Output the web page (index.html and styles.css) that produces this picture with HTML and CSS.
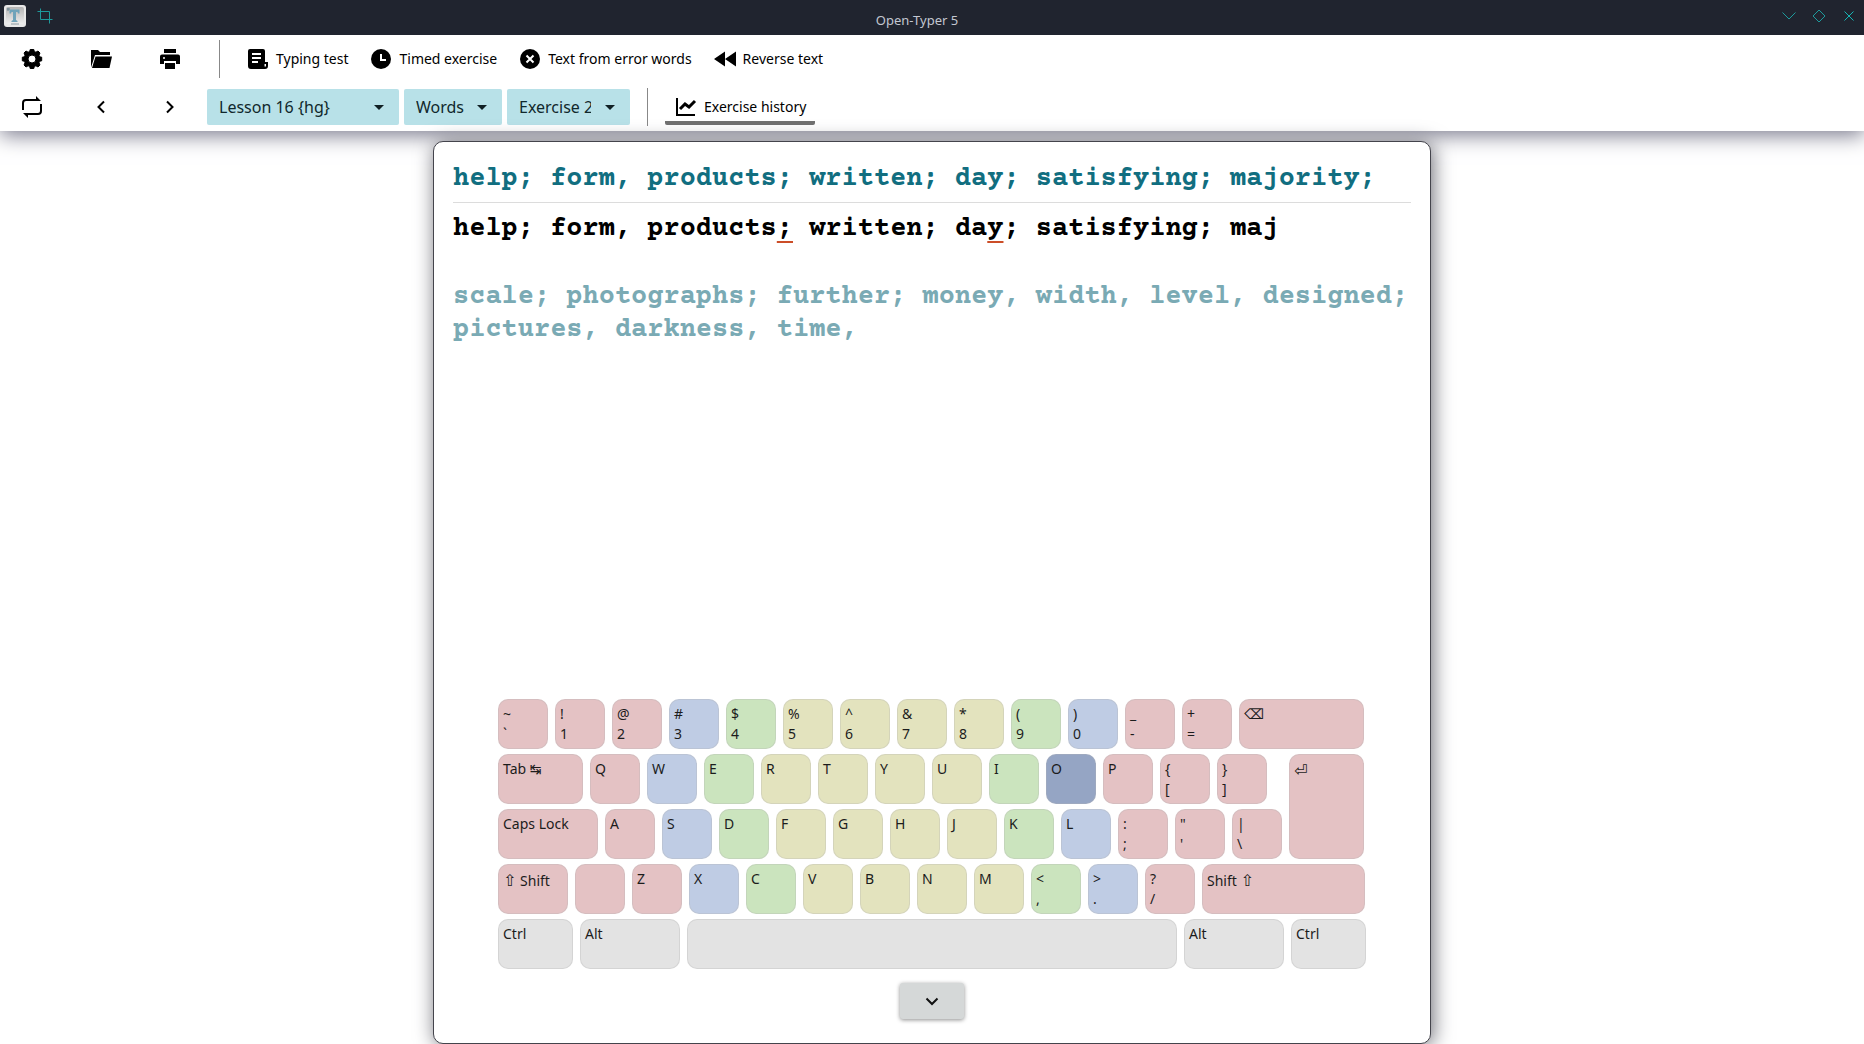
FILE: index.html
```html
<!DOCTYPE html>
<html lang="en">
<head>
<meta charset="utf-8">
<title>Open-Typer 5</title>
<link rel="stylesheet" href="styles.css">
</head>
<body>
<header class="titlebar">
  <div class="title-side">
    <svg class="app-icon" width="22" height="22" viewBox="0 0 22 22"><defs><linearGradient id="cap" x1="0" y1="0" x2="0" y2="1"><stop offset="0" stop-color="#b4b4b4"/><stop offset="1" stop-color="#eeeeee"/></linearGradient></defs><rect width="22" height="22" rx="3" fill="#e8e8e8"/><rect x="2" y="2" width="18" height="17" rx="2" fill="url(#cap)"/><path d="M5.500 4.500h10v4h-1.500l-.5-1.500h-1.500v8l1.500 1v1h-6v-1l1.500-1v-8H7.500L7 8.500H5.500z" fill="#6fa3ba"/><path d="M7 19h8" stroke="#8a9aa2" stroke-width="1"/><path d="M3 4h3M4 3v3" stroke="#6b8490"/></svg>
    <svg class="crop-icon" width="16" height="16" viewBox="0 0 16 16" fill="none" stroke="#1d9a9c"><path d="M.5 3.500h12v9M3.500.5v11h12M12.500 10v5.500"/></svg>
  </div>
  <h1 class="title">Open-Typer 5</h1>
  <div class="title-side title-buttons">
    <button class="win-btn" aria-label="Minimize"><svg width="14" height="14" viewBox="0 0 14 14"><path d="M.5 3.500 7 10l6.500-6.500"/></svg></button>
    <button class="win-btn" aria-label="Maximize"><svg width="14" height="14" viewBox="0 0 14 14"><path d="M7 1l6 6-6 6-6-6z"/></svg></button>
    <button class="win-btn close" aria-label="Close"><svg width="14" height="14" viewBox="0 0 14 14"><path d="M2.500 2.500l9 9M11.500 2.500l-9 9"/></svg></button>
  </div>
</header>

<nav class="toolbar">
  <div class="tool-row">
    <div class="tool-icons">
      <button class="icon-btn" aria-label="Settings"><svg width="22" height="22" viewBox="0 0 22 22"><path fill-rule="evenodd" stroke="#000" stroke-linejoin="round" d="M9.200 1.500h3.600l.5 2 1.600.7 2.100-1.200L19 5l-1 2.200.6 1.600 2.100.4v3.600l-2.100.5-.6 1.500L19 17l-2 2-2.100-1.200-1.600.7-.5 2H9.200l-.5-2-1.600-.7L5 19l-2-2 1-2.200-.6-1.500-2.100-.5V9.200l2.100-.4L4 7.200 3 5l2-2 2.100 1.200 1.600-.7zM11 7a4 4 0 1 0 0 8 4 4 0 0 0 0-8z"/></svg></button>
      <button class="icon-btn" aria-label="Open"><svg width="22" height="22" viewBox="0 0 22 22"><path d="M1 2h7l2 2h10v3H5L1.800 17 1 19.500z"/><path d="M5.500 8.500H22L19.500 20H2z"/></svg></button>
      <button class="icon-btn" aria-label="Print"><svg width="22" height="22" viewBox="0 0 22 22"><path d="M5 1h12v4H5zM3 6.500h16q2 0 2 2V16h-4v-3H5v3H1V8.500q0-2 2-2z"/><path d="M6 15h10v6H6z"/><circle cx="5" cy="10" r="1" fill="#fff"/></svg></button>
    </div>
    <span class="divider"></span>
    <div class="actions">
      <button class="text-btn"><svg width="22" height="22" viewBox="0 0 22 22"><path fill-rule="evenodd" d="M3 1h13q2 0 2 2v11h3v4q0 3-3 3H4q-3 0-3-3V3q0-2 2-2zM5 5v2h9V5zM5 9v2h9V9zM5 13v2h6v-2zM17.500 16v2.500h1.500V16z"/></svg>Typing test</button>
      <button class="text-btn"><svg width="22" height="22" viewBox="0 0 22 22"><circle cx="11" cy="11" r="10"/><path d="M11 6v6h5" fill="none" stroke="#fff" stroke-width="2"/></svg>Timed exercise</button>
      <button class="text-btn"><svg width="22" height="22" viewBox="0 0 22 22"><circle cx="11" cy="11" r="10"/><path d="M7.500 7.500l7 7M14.500 7.500l-7 7" stroke="#fff" stroke-width="2"/></svg>Text from error words</button>
      <button class="text-btn"><svg width="22" height="22" viewBox="0 0 22 22"><path d="M0 11 11 3.500v15zM11 11l11-7.500v15z"/></svg>Reverse text</button>
    </div>
  </div>
  <div class="tool-row">
    <div class="tool-icons">
      <button class="icon-btn" aria-label="Repeat"><svg width="22" height="22" viewBox="0 0 22 22"><path d="M2 14V7q0-3 3-3h13M20 8v7q0 3-3 3H4" fill="none" stroke="#000" stroke-width="2"/><path d="M15 0l5 5h-5zM7 22l-5-5h5z"/></svg></button>
      <button class="icon-btn" aria-label="Previous"><svg width="22" height="22" viewBox="0 0 22 22"><path d="M14 5.500 8.500 11l5.500 5.500" fill="none" stroke="#000" stroke-width="2"/></svg></button>
      <button class="icon-btn" aria-label="Next"><svg width="22" height="22" viewBox="0 0 22 22"><path d="M8 5.500l5.500 5.500L8 16.500" fill="none" stroke="#000" stroke-width="2"/></svg></button>
    </div>
    <div class="combos">
      <select class="combo combo-lesson" aria-label="Lesson"><option>Lesson 16 {hg}</option></select>
      <select class="combo combo-type" aria-label="Exercise type"><option>Words</option></select>
      <select class="combo combo-exercise" aria-label="Exercise"><option>Exercise 2</option></select>
    </div>
    <span class="divider"></span>
    <button class="text-btn history"><svg width="22" height="22" viewBox="0 0 22 22"><path d="M2 2v17h18" fill="none" stroke="#000" stroke-width="2"/><path d="M5 13l5-5 4 3 6-6" fill="none" stroke="#000" stroke-width="3"/></svg>Exercise history</button>
  </div>
</nav>

<main class="stage">
  <section class="paper">
    <p class="line current">help; form, products; written; day; satisfying; majority;</p>
    <p class="line typed">help; form, products<u>;</u> written; da<u>y</u>; satisfying; maj</p>
    <p class="line upcoming">scale; photographs; further; money, width, level, designed; pictures, darkness, time,</p>
    <div class="keyboard">
      <div class="key-row">
        <kbd class="key pink">~<br>`</kbd><kbd class="key pink">!<br>1</kbd><kbd class="key pink">@<br>2</kbd><kbd class="key blue">#<br>3</kbd><kbd class="key green">$<br>4</kbd><kbd class="key yellow">%<br>5</kbd><kbd class="key yellow">^<br>6</kbd><kbd class="key yellow">&amp;<br>7</kbd><kbd class="key yellow">*<br>8</kbd><kbd class="key green">(<br>9</kbd><kbd class="key blue">)<br>0</kbd><kbd class="key pink">_<br>-</kbd><kbd class="key pink">+<br>=</kbd><kbd class="key pink w-backspace">⌫</kbd>
      </div>
      <div class="key-block">
        <div class="key-rows">
          <div class="key-row">
            <kbd class="key pink w-tab">Tab ↹</kbd><kbd class="key pink">Q</kbd><kbd class="key blue">W</kbd><kbd class="key green">E</kbd><kbd class="key yellow">R</kbd><kbd class="key yellow">T</kbd><kbd class="key yellow">Y</kbd><kbd class="key yellow">U</kbd><kbd class="key green">I</kbd><kbd class="key blue pressed">O</kbd><kbd class="key pink">P</kbd><kbd class="key pink">{<br>[</kbd><kbd class="key pink">}<br>]</kbd>
          </div>
          <div class="key-row">
            <kbd class="key pink w-wide">Caps Lock</kbd><kbd class="key pink">A</kbd><kbd class="key blue">S</kbd><kbd class="key green">D</kbd><kbd class="key yellow">F</kbd><kbd class="key yellow">G</kbd><kbd class="key yellow">H</kbd><kbd class="key yellow">J</kbd><kbd class="key green">K</kbd><kbd class="key blue">L</kbd><kbd class="key pink">:<br>;</kbd><kbd class="key pink">"<br>'</kbd><kbd class="key pink">|<br>\</kbd>
          </div>
        </div>
        <kbd class="key pink w-ctrl enter"><span class="symbol">⏎</span></kbd>
      </div>
      <div class="key-row">
        <kbd class="key pink w-lshift"><span class="symbol">⇧</span> Shift</kbd><kbd class="key pink"></kbd><kbd class="key pink">Z</kbd><kbd class="key blue">X</kbd><kbd class="key green">C</kbd><kbd class="key yellow">V</kbd><kbd class="key yellow">B</kbd><kbd class="key yellow">N</kbd><kbd class="key yellow">M</kbd><kbd class="key green">&lt;<br>,</kbd><kbd class="key blue">&gt;<br>.</kbd><kbd class="key pink">?<br>/</kbd><kbd class="key pink w-rshift">Shift <span class="symbol">⇧</span></kbd>
      </div>
      <div class="key-row">
        <kbd class="key gray w-ctrl">Ctrl</kbd><kbd class="key gray w-wide">Alt</kbd><kbd class="key gray w-space"></kbd><kbd class="key gray w-wide">Alt</kbd><kbd class="key gray w-ctrl">Ctrl</kbd>
      </div>
    </div>
    <button class="collapse" aria-label="Hide keyboard"><svg width="22" height="22" viewBox="0 0 22 22"><path d="M5.500 8.500 11 14l5.500-5.500" fill="none" stroke="#111" stroke-width="2"/></svg></button>
  </section>
</main>
</body>
</html>
```
FILE: styles.css
```css
* { box-sizing: border-box; }
body {
  margin: 0;
  min-height: 100vh;
  display: flex;
  flex-direction: column;
  background: #fff;
  color: #000;
  font-family: "Noto Sans", sans-serif;
  font-size: 14px;
  overflow: hidden;
}
button { border: 0; padding: 0; background: none; color: inherit; font: inherit; }
svg { display: block; flex: none; }

.titlebar {
  display: flex;
  align-items: center;
  height: 35px;
  background: #20242f;
  color: #c3c7d1;
  position: relative;
  z-index: 2;
}
.title-side { flex: 1; display: flex; align-items: center; gap: 11px; padding: 0 4px 3px; }
.title { margin: 0; padding: 4px 26px 0 0; font-size: 13px; font-weight: 400; }
.title-buttons { justify-content: flex-end; gap: 16px; padding-right: 8px; }
.win-btn svg { fill: none; stroke: #1d9a9c; }
.win-btn.close svg { stroke: #16b5b5; stroke-width: 1; }

.toolbar {
  position: relative;
  background: #fff;
  box-shadow: 0 4px 20px 0 #77778a;
}
.tool-row { display: flex; align-items: center; height: 48px; }
.tool-icons { display: flex; gap: 47px; padding: 0 26px 0 21px; }
.divider { width: 1px; height: 38px; background: #888; margin-left: 12px; }
.actions { display: flex; gap: 22px; padding-left: 27px; }
.text-btn { display: flex; align-items: center; gap: 7px; line-height: 18px; white-space: nowrap; }
.combos { display: flex; gap: 5px; padding-right: 5px; }
.combo {
  appearance: none;
  height: 36px;
  border: 0;
  border-radius: 2px;
  padding: 0 12px;
  color: #10282c;
  font: 16px "Noto Sans", sans-serif;
  background: #b8e1e8 url("data:image/svg+xml,%3Csvg xmlns='http://www.w3.org/2000/svg' width='10' height='5'%3E%3Cpath d='M0 0h10L5 5z' fill='%23102024'/%3E%3C/svg%3E") no-repeat right 15px center;
}
.combo-lesson { width: 192px; }
.combo-type { width: 98px; }
.combo-exercise { width: 123px; padding-right: 39px; }
.history {
  height: 36px;
  margin-left: 17px;
  padding: 4px 9px 0 10px;
  border-bottom: 4px solid #707070;
  border-radius: 2px;
}

.stage { flex: 1; display: flex; justify-content: center; padding-top: 10px; }
.paper {
  position: relative;
  display: flex;
  flex-direction: column;
  width: 998px;
  padding: 21px 19px 24px;
  border: 1px solid #44444c;
  border-radius: 10px;
  background: #fff;
  box-shadow: 2px 2px 20px 0 #6c6c74;
}
.line {
  margin: 0;
  font: 700 27px/33px "Courier Prime", "Courier 10 Pitch", "Nimbus Mono PS", "FreeMono", "Liberation Mono", monospace;
}
.current { color: #116e80; padding-bottom: 6px; border-bottom: 1px solid #dcdcdc; }
.typed { padding-top: 10px; }
.typed u { text-decoration: underline 2px #cc4e28; text-underline-offset: 6px; text-decoration-skip-ink: none; }
.upcoming { color: #7aaab4; padding-top: 35px; }

.keyboard { display: flex; flex-direction: column; gap: 5px; margin: auto 45px 0; }
.key-row, .key-block { display: flex; gap: 7px; }
.key-rows { display: flex; flex-direction: column; gap: 5px; }
.key {
  flex: none;
  width: 50px;
  height: 50px;
  padding: 4px;
  border: 1px solid rgba(180, 180, 180, 0.3);
  border-radius: 10px;
  color: #1c1c1c;
  font: 14px/20px "Noto Sans", "DejaVu Sans", sans-serif;
  white-space: nowrap;
}
.pink { background: #e4c2c4; }
.blue { background: #bfcce4; }
.green { background: #cbe4be; }
.yellow { background: #e3e3be; }
.gray { background: #e3e3e3; }
.pressed { background: #95a5c4; }
.w-backspace { width: 125px; }
.w-tab { width: 85px; }
.w-wide { width: 100px; }
.w-ctrl { width: 75px; }
.w-lshift { width: 70px; }
.w-rshift { width: 163px; }
.w-space { width: 490px; }
.w-lshift, .w-rshift { padding-top: 6px; }
.enter { height: auto; padding-top: 6px; }
.symbol { font-size: 16px; line-height: 16px; }

.collapse {
  display: flex;
  align-items: center;
  justify-content: center;
  align-self: center;
  width: 64px;
  height: 36px;
  margin-top: 14px;
  border-radius: 3px;
  background: #d5d8d8;
  box-shadow: 0 1px 4px rgba(0, 0, 0, 0.45);
}
```
